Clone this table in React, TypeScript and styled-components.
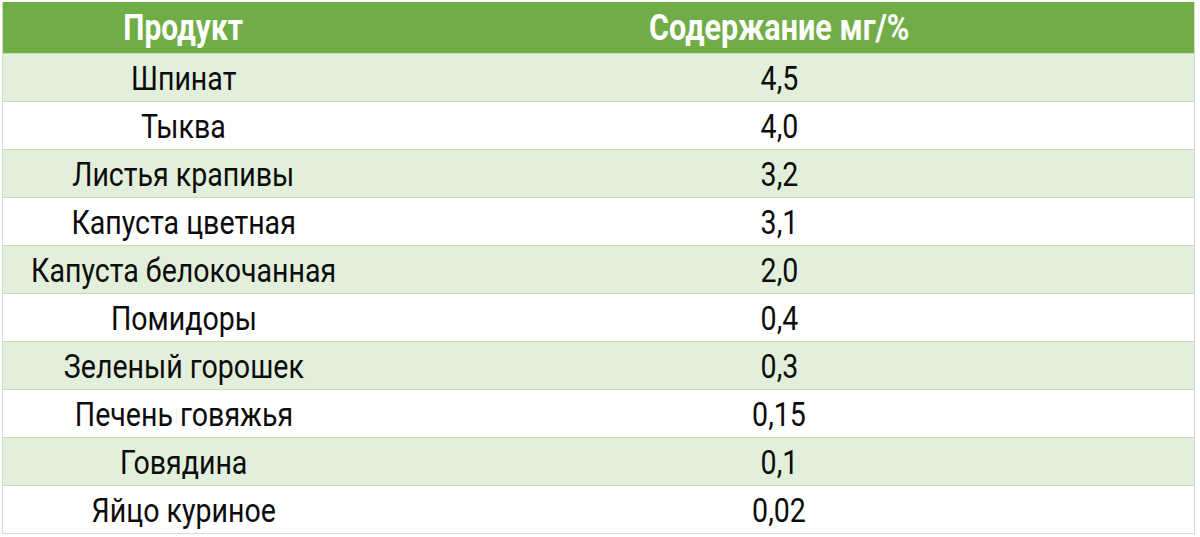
import React from "react";
import styled, { createGlobalStyle } from "styled-components";

const Global = createGlobalStyle`
  html, body { margin: 0; padding: 0; background: #ffffff; }
  body { font-family: Roboto, "DejaVu Sans Condensed", sans-serif; }
`;

const Page = styled.div`
  width: 1200px;
  height: 537px;
  padding: 2px 5px 0 2px;
  box-sizing: border-box;
  background: #ffffff;
`;

const Table = styled.div`
  display: grid;
  grid-template-columns: 361px 1fr;
  border-left: 1px solid #d4ddd0;
  border-right: 1px solid #d4ddd0;
  border-bottom: 1px solid #d4ddd0;
`;

const HeadCell = styled.div`
  height: 51px;
  background: #70ad47;
  color: #ffffff;
  font-weight: 700;
  font-size: 36px;
  display: flex;
  align-items: center;
  justify-content: center;
`;

const Cell = styled.div<{ $alt: boolean }>`
  height: 47px;
  border-top: 1px solid #c6dbb8;
  background: ${(p) => (p.$alt ? "#e2efda" : "#ffffff")};
  color: #0c0c0c;
  font-size: 34px;
  display: flex;
  align-items: center;
  justify-content: center;
`;

const Label = styled.span<{ $squeeze: number }>`
  display: inline-block;
  white-space: nowrap;
  transform: scaleX(${(p) => p.$squeeze});
  transform-origin: center;
  line-height: 1;
`;

const rows: [string, string][] = [
  ["Шпинат", "4,5"],
  ["Тыква", "4,0"],
  ["Листья крапивы", "3,2"],
  ["Капуста цветная", "3,1"],
  ["Капуста белокочанная", "2,0"],
  ["Помидоры", "0,4"],
  ["Зеленый горошек", "0,3"],
  ["Печень говяжья", "0,15"],
  ["Говядина", "0,1"],
  ["Яйцо куриное", "0,02"],
];

export default function App() {
  return (
    <Page>
      <Global />
      <Table>
        <HeadCell>
          <Label $squeeze={0.83}>Продукт</Label>
        </HeadCell>
        <HeadCell>
          <Label $squeeze={0.85}>Содержание мг/%</Label>
        </HeadCell>
        {rows.map(([name, value], i) => (
          <React.Fragment key={name}>
            <Cell $alt={i % 2 === 0}>
              <Label $squeeze={0.84}>{name}</Label>
            </Cell>
            <Cell $alt={i % 2 === 0}>
              <Label $squeeze={0.84}>{value}</Label>
            </Cell>
          </React.Fragment>
        ))}
      </Table>
    </Page>
  );
}
